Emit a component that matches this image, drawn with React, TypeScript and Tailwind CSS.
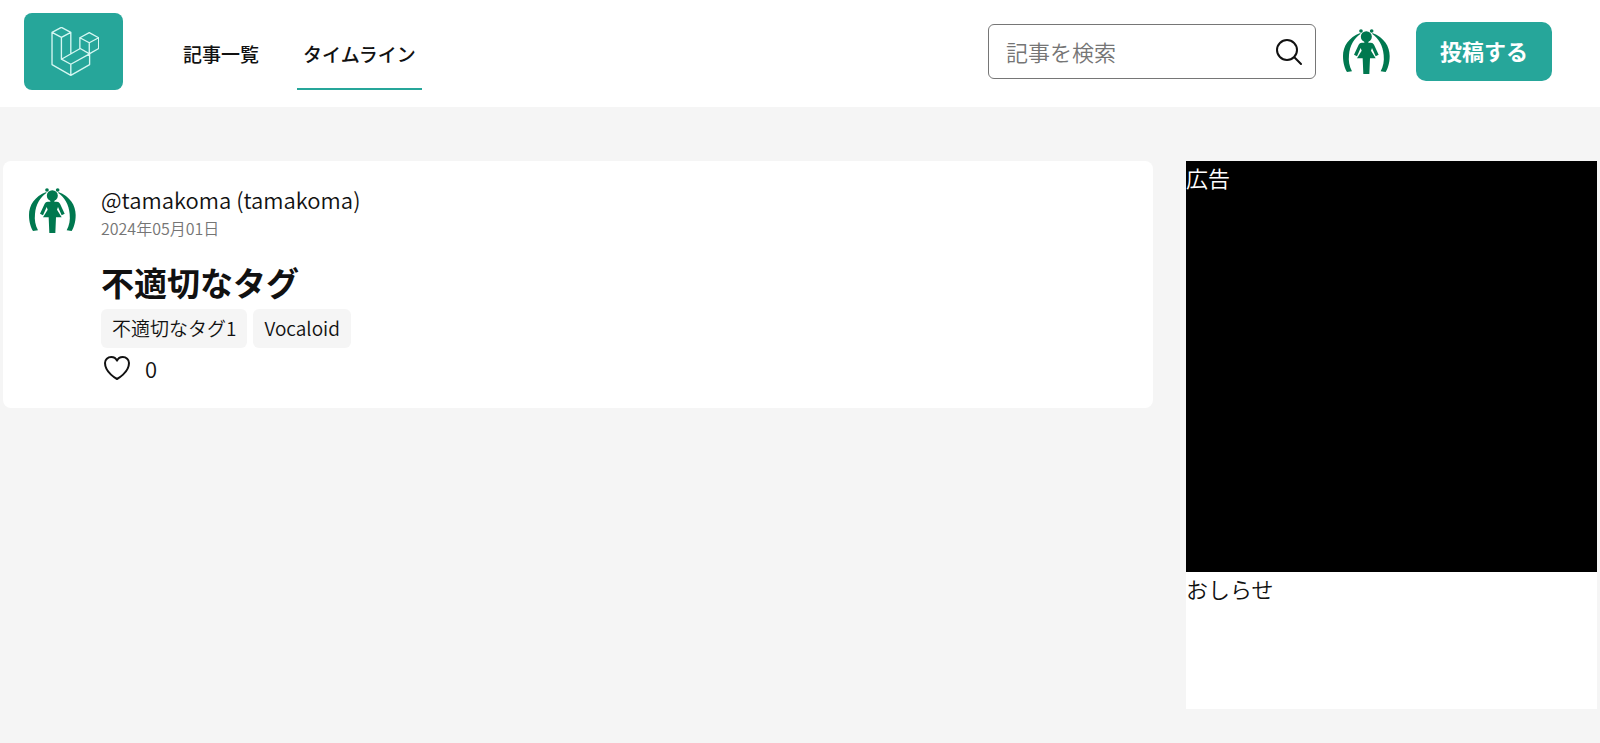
import React from 'react';

interface Article {
  id: number;
  author: string;
  name: string;
  date: string;
  title: string;
  tags: string[];
  likes: number;
}

const articles: Article[] = [
  {
    id: 1,
    author: 'tamakoma',
    name: 'tamakoma',
    date: '2024年05月01日',
    title: '不適切なタグ',
    tags: ['不適切なタグ1', 'Vocaloid'],
    likes: 0,
  },
];

function Logo() {
  return (
    <svg viewBox="150 83 147 149" className="h-[50px] w-[50px]" fill="none" stroke="#d5f7f2" strokeWidth="4" strokeLinejoin="round" strokeLinecap="round">
      {/* L */}
      <path d="M158 99 186 84 214 99 186 114ZM158 99V195L214 227 270 195V163M186 114V179L214 194V227M214 99V163M214 194 270 163M186 179 242 147 270 163" />
      {/* Cubo */}
      <path d="M241 115 269 100 297 115 269 130ZM241 115V147M269 130V163L297 147V115" />
    </svg>
  );
}

function Avatar() {
  return (
    <svg viewBox="67 54 144 144" className="h-12 w-12 shrink-0" fill="#00784f">
      <path d="M122 69C87 82 70 109 70 138C70 160 76 177 82 186L97 184C89 169 86 153 88 135C90 107 104 84 122 72Z" />
      <path d="M158 69C193 82 210 109 210 138C210 160 204 177 198 186L183 184C191 169 194 153 192 135C190 107 176 84 158 72Z" />
      <circle cx="124" cy="63" r="5.5" />
      <circle cx="156" cy="63" r="5.5" />
      <circle cx="140" cy="80" r="16.5" />
      <path d="M134 92H146V98H154Q160 98 163 104L177 134 168 139 157 114 154 122 168 145H151L149 192H131L129 145H112L126 122 123 114 112 139 103 134 117 104Q120 98 126 98H134Z" />
    </svg>
  );
}

function SearchIcon() {
  return (
    <svg viewBox="0 0 24 24" className="h-8 w-8" fill="none" stroke="currentColor" strokeWidth="1.5" strokeLinecap="round" strokeLinejoin="round">
      <path d="m21 21-5.197-5.197m0 0A7.5 7.5 0 1 0 5.196 5.196a7.5 7.5 0 0 0 10.607 10.607Z" />
    </svg>
  );
}

function HeartIcon() {
  return (
    <svg viewBox="0 0 24 24" className="h-8 w-8" fill="none" stroke="currentColor" strokeWidth="1.5" strokeLinecap="round" strokeLinejoin="round">
      <path d="M21 8.25c0-2.485-2.099-4.5-4.688-4.5-1.935 0-3.597 1.126-4.312 2.733-.715-1.607-2.377-2.733-4.313-2.733C5.1 3.75 3 5.765 3 8.25c0 7.22 9 12 9 12s9-4.78 9-12Z" />
    </svg>
  );
}

function Header() {
  return (
    <header className="flex items-center justify-between bg-white pt-[13px] pr-12 pb-[17px] pl-6">
      <div className="flex items-center">
        <a href="#" aria-label="ホーム" className="flex h-[77px] w-[99px] items-center justify-center rounded-lg bg-[#26a69a]">
          <Logo />
        </a>
        <nav className="ml-[54px] flex gap-8 self-stretch text-[19px] font-medium">
          <a href="#" className="flex items-center border-b-2 border-transparent px-[6px] pt-2">記事一覧</a>
          <a href="#" aria-current="page" className="flex items-center border-b-2 border-[#26a69a] px-[6px] pt-2">タイムライン</a>
        </nav>
      </div>

      <div className="flex items-center gap-[26px]">
        <form className="relative" onSubmit={(e) => e.preventDefault()}>
          <input
            type="search"
            aria-label="記事を検索"
            placeholder="記事を検索"
            className="block h-[55px] w-[328px] rounded-md border border-[#767676] pr-14 pb-[2px] pl-[17px] text-[22px] font-[350] placeholder:text-[#757575]"
          />
          <button type="submit" aria-label="検索" className="absolute inset-y-0 right-[11px] flex items-center">
            <SearchIcon />
          </button>
        </form>
        <a href="#" aria-label="マイページ">
          <Avatar />
        </a>
        <button type="button" className="h-[59px] rounded-[10px] bg-[#26a69a] px-6 pb-[2px] text-[22px] font-bold text-white">
          投稿する
        </button>
      </div>
    </header>
  );
}

function ArticleCard({ article }: { article: Article }) {
  return (
    <article className="flex gap-[25px] rounded-lg bg-white px-[25px] pt-[22px] pb-6">
      <div className="pt-1">
        <Avatar />
      </div>
      <div className="min-w-0 flex-1">
        <p className="text-[22px] leading-8">
          @{article.author} ({article.name})
        </p>
        <p className="text-base leading-[26px] text-[#757575]">{article.date}</p>
        <h2 className="mt-[21px] text-[33px] leading-10 font-bold">
          <a href="#">{article.title}</a>
        </h2>
        <ul className="mt-[7px] flex gap-[6px]">
          {article.tags.map((tag) => (
            <li key={tag}>
              <a href="#" className="flex h-[39px] items-center rounded-md bg-[#f5f5f5] px-[11px] text-[19px]">{tag}</a>
            </li>
          ))}
        </ul>
        <div className="mt-1 flex items-center gap-3 text-[22px] leading-8">
          <button type="button" aria-label="いいね">
            <HeartIcon />
          </button>
          <span>{article.likes}</span>
        </div>
      </div>
    </article>
  );
}

export default function App() {
  return (
    <div className="min-h-screen bg-[#f5f5f5] font-['Noto_Sans_CJK_JP',sans-serif] font-[350] text-[#111]">
      <Header />
      <div className="grid grid-cols-[1fr_411px] items-start gap-[33px] px-[3px] pt-[54px]">
        <main className="flex flex-col gap-4">
          {articles.map((article) => (
            <ArticleCard key={article.id} article={article} />
          ))}
        </main>
        <aside className="text-[22px] leading-8">
          <section className="aspect-square bg-black text-white">広告</section>
          <section className="h-[137px] bg-white">おしらせ</section>
        </aside>
      </div>
    </div>
  );
}
